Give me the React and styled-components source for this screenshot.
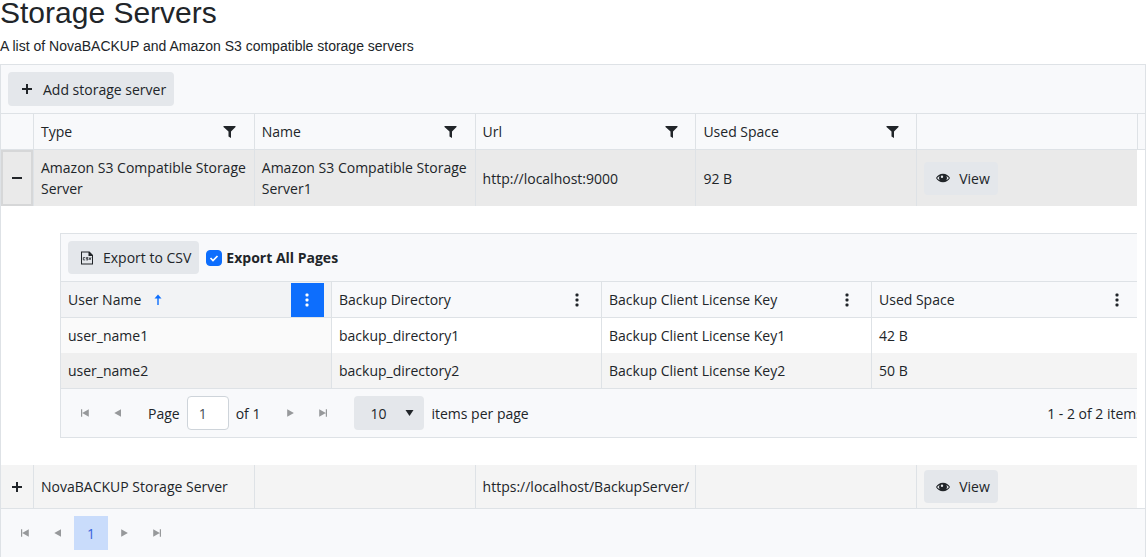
import { useState } from "react";
import styled, { createGlobalStyle } from "styled-components";

const GlobalStyle = createGlobalStyle`
  *, *::before, *::after {
    box-sizing: border-box;
  }

  body {
    margin: 0;
    background: #ffffff;
    color: #212529;
    font-family: "Liberation Sans", Arial, sans-serif;
    font-size: 14px;
  }

  button, input, select {
    color: inherit;
    font: inherit;
  }
`;

const Page = styled.main`
  display: flex;
  flex-direction: column;
`;

const Title = styled.h1`
  margin: 0;
  padding-bottom: 10px;
  font-size: 30px;
  font-weight: 400;
  line-height: 26px;
`;

const Subtitle = styled.p`
  margin: 0;
  padding-bottom: 8px;
  font-size: 14px;
  line-height: 20px;
`;

const Grid = styled.section`
  border: 1px solid #dee2e6;
  border-bottom-width: ${(props) => (props.$nested ? "1px" : "0")};
  background: #ffffff;
  font-family: "Open Sans", "Noto Sans", sans-serif;
  font-size: 14px;
  line-height: 21px;
`;

const Toolbar = styled.div`
  display: flex;
  align-items: center;
  gap: 7px;
  padding: 7px;
  background: #f8f9fb;
`;

const Button = styled.button`
  display: inline-flex;
  align-items: center;
  gap: 8px;
  height: ${(props) => (props.$compact ? "33px" : "34px")};
  padding: 0 8px 0 11px;
  border: 0;
  border-radius: 4px;
  background: #e4e7eb;
  cursor: pointer;
`;

const Icon = styled.svg`
  display: block;
  flex: none;
  width: 16px;
  height: 16px;
  fill: currentColor;
`;

const Table = styled.table`
  width: 100%;
  border-collapse: separate;
  border-spacing: 0;
  table-layout: fixed;
`;

const Column = styled.col`
  width: ${(props) => props.$width || "auto"};
`;

const HeaderCell = styled.th`
  height: 37px;
  padding: 0 7px;
  border: solid #dee2e6;
  border-width: 1px 0 1px 1px;
  background: ${(props) => (props.$sorted ? "#f2f3f5" : "#f8f9fb")};
  font-weight: 400;
  text-align: left;

  &:first-child {
    border-left: 0;
  }
`;

const GutterHead = styled.th`
  padding: 0;
  border: solid #dee2e6;
  border-width: 1px 0 1px 1px;
  background: #f8f9fb;
`;

const HeaderContent = styled.div`
  display: flex;
  align-items: center;
  gap: 9px;
  height: 35px;
`;

const HeaderButton = styled.button`
  display: flex;
  align-items: center;
  justify-content: center;
  width: 33px;
  height: 34px;
  margin-left: auto;
  padding: 0;
  border: 0;
  background: ${(props) => (props.$active ? "#0d6efd" : "transparent")};
  color: ${(props) => (props.$active ? "#ffffff" : "#212529")};
  cursor: pointer;
`;

const SortIcon = styled(Icon)`
  color: #0d6efd;
`;

const rowColors = {
  plain: "#ffffff",
  alt: "#f4f4f4",
  selected: "#eaeaea",
};

const Row = styled.tr`
  background: ${(props) => rowColors[props.$tone]};
`;

const Cell = styled.td`
  padding: 7px;
  border-left: 1px solid #dee2e6;
  background: ${(props) => (props.$sorted ? "rgba(0, 0, 0, 0.02)" : "transparent")};

  &:first-child {
    border-left: 0;
  }
`;

const CommandCell = styled(Cell)`
  padding: 5px 7px;
`;

const ExpandCell = styled.td`
  height: 43px;
  padding: 0;
  border: ${(props) => (props.$focused ? "2px solid #d6d7d8" : "0")};
`;

const ExpandButton = styled.button`
  display: flex;
  align-items: center;
  justify-content: center;
  width: 100%;
  height: 33px;
  padding: 0;
  border: 0;
  background: transparent;
  cursor: pointer;
`;

const Gutter = styled.td`
  padding: 0;
  background: #ffffff;
`;

const DetailCell = styled.td`
  padding: 27px 0 27px 59px;
  overflow: hidden;
`;

const NestedFrame = styled.div`
  margin-right: -14px;
`;

const CheckLabel = styled.label`
  display: inline-flex;
  align-items: center;
  gap: 4px;
  font-weight: 700;
`;

const CheckBox = styled.span`
  position: relative;
  display: inline-flex;
`;

const CheckInput = styled.input`
  width: 16px;
  height: 16px;
  margin: 0;
  border: 1px solid #0d6efd;
  border-radius: 4px;
  background: #ffffff;
  appearance: none;

  &:checked {
    background: #0d6efd;
  }
`;

const CheckMark = styled.svg`
  position: absolute;
  inset: 0;
  width: 16px;
  height: 16px;
  fill: none;
  stroke: #ffffff;
  stroke-width: 1.7;
  pointer-events: none;
`;

const Pager = styled.nav`
  display: flex;
  align-items: center;
  gap: 14px;
  padding: 7px;
  border-top: 1px solid #dee2e6;
  background: #f8f9fb;
`;

const PagerGroup = styled.div`
  display: flex;
  align-items: center;
`;

const PagerLabel = styled.label`
  display: flex;
  align-items: center;
  gap: 7px;
  white-space: nowrap;
`;

const PagerInfo = styled.span`
  margin-left: auto;
  white-space: nowrap;
`;

const PagerButton = styled.button`
  display: flex;
  align-items: center;
  justify-content: center;
  width: 33px;
  height: 34px;
  padding: 0;
  border: 0;
  background: transparent;
  color: #97999b;
`;

const PageNumber = styled(PagerButton)`
  width: 34px;
  background: #c9dcfb;
  color: #3862dc;
`;

const PageInput = styled.input`
  width: 42px;
  height: 34px;
  padding: 0 11px;
  border: 1px solid #ced4da;
  border-radius: 4px;
  background: #ffffff;
  color: #495057;
`;

const SelectBox = styled.span`
  position: relative;
  display: inline-flex;
  align-items: center;
`;

const PageSize = styled.select`
  width: 70px;
  height: 34px;
  padding: 0 16px;
  border: 0;
  border-radius: 4px;
  background: #e4e7eb;
  appearance: none;
`;

const SelectArrow = styled(Icon)`
  position: absolute;
  right: 6px;
  pointer-events: none;
`;

const icons = {
  plus: "M7 3h2v4h4v2H9v4H7V9H3V7h4z",
  minus: "M3 7h10v2H3z",
  filter: "M1.500 2h12v1L9 7.500V14L6.500 12.500V7.500L1.500 3z",
  up: "M8 2.500L11.500 6.500H8.700V13H7.300V6.500H4.500z",
  first: "M4 4.200h1.200v7.600H4zM11.800 4.200v7.600L5.200 8z",
  prev: "M11 4.200v7.600L4.300 8z",
  next: "M4.200 4.200v7.600L10.900 8z",
  last: "M9.800 4.200H11v7.600H9.800zM3.200 4.200v7.600L9.800 8z",
  down: "M3.500 5h8l-4 6z",
};

const Glyph = ({ name }) => (
  <Icon viewBox="0 0 16 16" aria-hidden="true">
    <path d={icons[name]} />
  </Icon>
);

const DotsIcon = () => (
  <Icon viewBox="0 0 16 16" aria-hidden="true">
    <rect x="5.500" y="1.500" width="3" height="3" rx="1" />
    <rect x="5.500" y="6.500" width="3" height="3" rx="1" />
    <rect x="5.500" y="11.500" width="3" height="3" rx="1" />
  </Icon>
);

const EyeIcon = () => (
  <Icon viewBox="0 0 16 16" aria-hidden="true">
    <path
      fillRule="evenodd"
      d="M8 3.800C4.800 3.800 2.400 5.600 1 8c1.400 2.400 3.800 4.200 7 4.200s5.600-1.800 7-4.200c-1.400-2.400-3.800-4.200-7-4.200zM4.600 5.900a4 4 0 0 0 0 4.200C3.500 9.600 2.700 8.900 2.100 8c.6-.9 1.400-1.600 2.500-2.100zM11.400 5.900c1.100.5 1.900 1.200 2.500 2.100-.6.900-1.400 1.600-2.500 2.100a4 4 0 0 0 0-4.200zM7 5.500a1.200 1.200 0 1 1 0 2.400 1.200 1.200 0 0 1 0-2.400z"
    />
  </Icon>
);

const CsvIcon = () => (
  <Icon viewBox="0 0 16 16" aria-hidden="true">
    <path
      fillRule="evenodd"
      d="M2 1.500h8.500L14 5v9.500H2zM3 2.500v11h10V6H9.500V2.500z"
    />
    <path
      d="M6.200 7.600H4.300v2.300h1.900M9 7.600H7.300v1.100H9v1.200H7.200M10 7.300l1 2.600 1-2.600"
      fill="none"
      stroke="currentColor"
      strokeWidth="0.800"
    />
  </Icon>
);

const serverColumns = ["Type", "Name", "Url", "Used Space"];

const servers = [
  {
    id: 1,
    type: "Amazon S3 Compatible Storage Server",
    name: "Amazon S3 Compatible Storage Server1",
    url: "http://localhost:9000",
    usedSpace: "92 B",
  },
  {
    id: 2,
    type: "NovaBACKUP Storage Server",
    name: "",
    url: "https://localhost/BackupServer/",
    usedSpace: "",
  },
];

const userColumns = [
  "User Name",
  "Backup Directory",
  "Backup Client License Key",
  "Used Space",
];

const users = [
  ["user_name1", "backup_directory1", "Backup Client License Key1", "42 B"],
  ["user_name2", "backup_directory2", "Backup Client License Key2", "50 B"],
];

const UserGrid = () => {
  const [exportAll, setExportAll] = useState(true);
  const [page, setPage] = useState("1");

  return (
    <Grid $nested>
      <Toolbar>
        <Button type="button" $compact>
          <CsvIcon />
          Export to CSV
        </Button>
        <CheckLabel>
          <CheckBox>
            <CheckInput
              type="checkbox"
              checked={exportAll}
              onChange={(e) => setExportAll(e.target.checked)}
            />
            {exportAll && (
              <CheckMark viewBox="0 0 16 16" aria-hidden="true">
                <path d="M4.500 8l2.500 2.500 4.500-4.500" />
              </CheckMark>
            )}
          </CheckBox>
          Export All Pages
        </CheckLabel>
      </Toolbar>
      <Table>
        <colgroup>
          {userColumns.map((column) => (
            <Column key={column} />
          ))}
          <Column $width="9px" />
        </colgroup>
        <thead>
          <tr>
            {userColumns.map((column, index) => (
              <HeaderCell key={column} scope="col" $sorted={index === 0}>
                <HeaderContent>
                  {column}
                  {index === 0 && (
                    <SortIcon viewBox="0 0 16 16" aria-hidden="true">
                      <path d={icons.up} />
                    </SortIcon>
                  )}
                  <HeaderButton
                    type="button"
                    aria-label={`${column} menu`}
                    $active={index === 0}
                  >
                    <DotsIcon />
                  </HeaderButton>
                </HeaderContent>
              </HeaderCell>
            ))}
            <GutterHead />
          </tr>
        </thead>
        <tbody>
          {users.map((user, row) => (
            <Row key={user[0]} $tone={row % 2 ? "alt" : "plain"}>
              {user.map((value, index) => (
                <Cell key={value} $sorted={index === 0}>
                  {value}
                </Cell>
              ))}
              <Gutter />
            </Row>
          ))}
        </tbody>
      </Table>
      <Pager aria-label="Users pages">
        <PagerGroup>
          <PagerButton type="button" aria-label="First page">
            <Glyph name="first" />
          </PagerButton>
          <PagerButton type="button" aria-label="Previous page">
            <Glyph name="prev" />
          </PagerButton>
        </PagerGroup>
        <PagerLabel>
          Page
          <PageInput value={page} onChange={(e) => setPage(e.target.value)} />
          of 1
        </PagerLabel>
        <PagerGroup>
          <PagerButton type="button" aria-label="Next page">
            <Glyph name="next" />
          </PagerButton>
          <PagerButton type="button" aria-label="Last page">
            <Glyph name="last" />
          </PagerButton>
        </PagerGroup>
        <PagerLabel>
          <SelectBox>
            <PageSize defaultValue="10">
              <option>10</option>
            </PageSize>
            <SelectArrow viewBox="0 0 16 16" aria-hidden="true">
              <path d={icons.down} />
            </SelectArrow>
          </SelectBox>
          items per page
        </PagerLabel>
        <PagerInfo>1 - 2 of 2 items</PagerInfo>
      </Pager>
    </Grid>
  );
};

const ServerRow = ({ server, expanded, tone, onToggle }) => (
  <>
    <Row $tone={tone}>
      <ExpandCell $focused={expanded}>
        <ExpandButton
          type="button"
          aria-expanded={expanded}
          aria-label="Toggle details"
          onClick={onToggle}
        >
          <Glyph name={expanded ? "minus" : "plus"} />
        </ExpandButton>
      </ExpandCell>
      <Cell>{server.type}</Cell>
      <Cell>{server.name}</Cell>
      <Cell>{server.url}</Cell>
      <Cell>{server.usedSpace}</Cell>
      <CommandCell>
        <Button type="button" $compact>
          <EyeIcon />
          View
        </Button>
      </CommandCell>
      <Gutter />
    </Row>
    {expanded && (
      <tr>
        <DetailCell colSpan={6}>
          <NestedFrame>
            <UserGrid />
          </NestedFrame>
        </DetailCell>
        <Gutter />
      </tr>
    )}
  </>
);

const App = () => {
  const [expandedId, setExpandedId] = useState(1);

  return (
    <Page>
      <GlobalStyle />
      <Title>Storage Servers</Title>
      <Subtitle>
        A list of NovaBACKUP and Amazon S3 compatible storage servers
      </Subtitle>
      <Grid>
        <Toolbar>
          <Button type="button">
            <Glyph name="plus" />
            Add storage server
          </Button>
        </Toolbar>
        <Table>
          <colgroup>
            <Column $width="32px" />
            {serverColumns.map((column) => (
              <Column key={column} />
            ))}
            <Column />
            <Column $width="8px" />
          </colgroup>
          <thead>
            <tr>
              <HeaderCell />
              {serverColumns.map((column) => (
                <HeaderCell key={column} scope="col">
                  <HeaderContent>
                    {column}
                    <HeaderButton type="button" aria-label={`Filter ${column}`}>
                      <Glyph name="filter" />
                    </HeaderButton>
                  </HeaderContent>
                </HeaderCell>
              ))}
              <HeaderCell />
              <GutterHead />
            </tr>
          </thead>
          <tbody>
            {servers.map((server, index) => (
              <ServerRow
                key={server.id}
                server={server}
                expanded={expandedId === server.id}
                tone={index % 2 ? "alt" : "selected"}
                onToggle={() =>
                  setExpandedId(expandedId === server.id ? null : server.id)
                }
              />
            ))}
          </tbody>
        </Table>
        <Pager aria-label="Storage servers pages">
          <PagerGroup>
            <PagerButton type="button" aria-label="First page">
              <Glyph name="first" />
            </PagerButton>
            <PagerButton type="button" aria-label="Previous page">
              <Glyph name="prev" />
            </PagerButton>
            <PageNumber type="button">1</PageNumber>
            <PagerButton type="button" aria-label="Next page">
              <Glyph name="next" />
            </PagerButton>
            <PagerButton type="button" aria-label="Last page">
              <Glyph name="last" />
            </PagerButton>
          </PagerGroup>
        </Pager>
      </Grid>
    </Page>
  );
};

export default App;
